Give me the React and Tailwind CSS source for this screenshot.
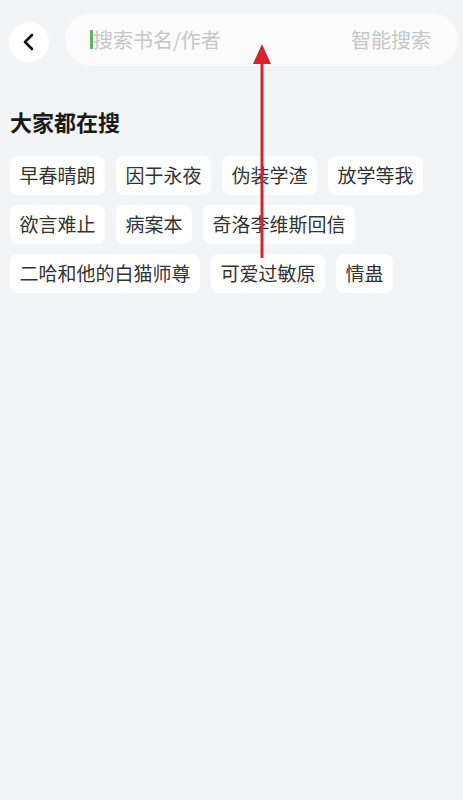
import React from 'react'

const tags = [
  ['早春晴朗', '因于永夜', '伪装学渣', '放学等我'],
  ['欲言难止', '病案本', '奇洛李维斯回信'],
  ['二哈和他的白猫师尊', '可爱过敏原', '情蛊'],
]

const App = () => {
  return (
    <div
      className="relative w-[463px] h-[800px] bg-[#f3f4f6] overflow-hidden"
      style={{ fontFamily: '"Noto Sans CJK SC", "Noto Sans", sans-serif' }}
    >
      {/* header */}
      <div className="flex items-center pt-[13px] pl-[9px] pr-[5px]">
        <button className="flex items-center justify-center w-10 h-10 mt-[5px] rounded-full bg-white shrink-0">
          <svg className="w-6 h-6" viewBox="0 0 24 24" fill="none" stroke="#111" strokeWidth="2.6" strokeLinecap="round" strokeLinejoin="round">
            <path d="M15 5l-7 7 7 7" />
          </svg>
        </button>
        <div className="flex items-center flex-1 h-[53px] ml-4 rounded-full bg-[#fbfbfb] pl-[25px] pr-[27px]">
          <span className="w-[3px] h-[19px] bg-[#5cb85c]" />
          <span className="flex-1 text-[20px] text-[#c6c6c6] leading-none">搜索书名/作者</span>
          <span className="text-[20px] text-[#c6c6c6] leading-none">智能搜索</span>
        </div>
      </div>

      {/* hot searches */}
      <div className="px-[10px] mt-[40px]">
        <h2 className="text-[22px] font-bold text-[#1a1a1a] leading-[30px]">大家都在搜</h2>
        <div className="flex flex-col gap-[10px] mt-[20px]">
          {tags.map((row, i) => (
            <div key={i} className="flex gap-[11px]">
              {row.map((t) => (
                <span
                  key={t}
                  className="flex items-center h-[39px] px-[9.5px] rounded-[8px] bg-white text-[19px] text-[#333]"
                >
                  {t}
                </span>
              ))}
            </div>
          ))}
        </div>
      </div>

      {/* annotation arrow */}
      <svg className="absolute left-[250px] top-[40px] w-[24px] h-[222px]" viewBox="0 0 24 222">
        <line x1="12" y1="20" x2="12" y2="218" stroke="#d8232a" strokeWidth="3" />
        <polygon points="12,4 3,24 21,24" fill="#d8232a" />
      </svg>
    </div>
  )
}

export default App
